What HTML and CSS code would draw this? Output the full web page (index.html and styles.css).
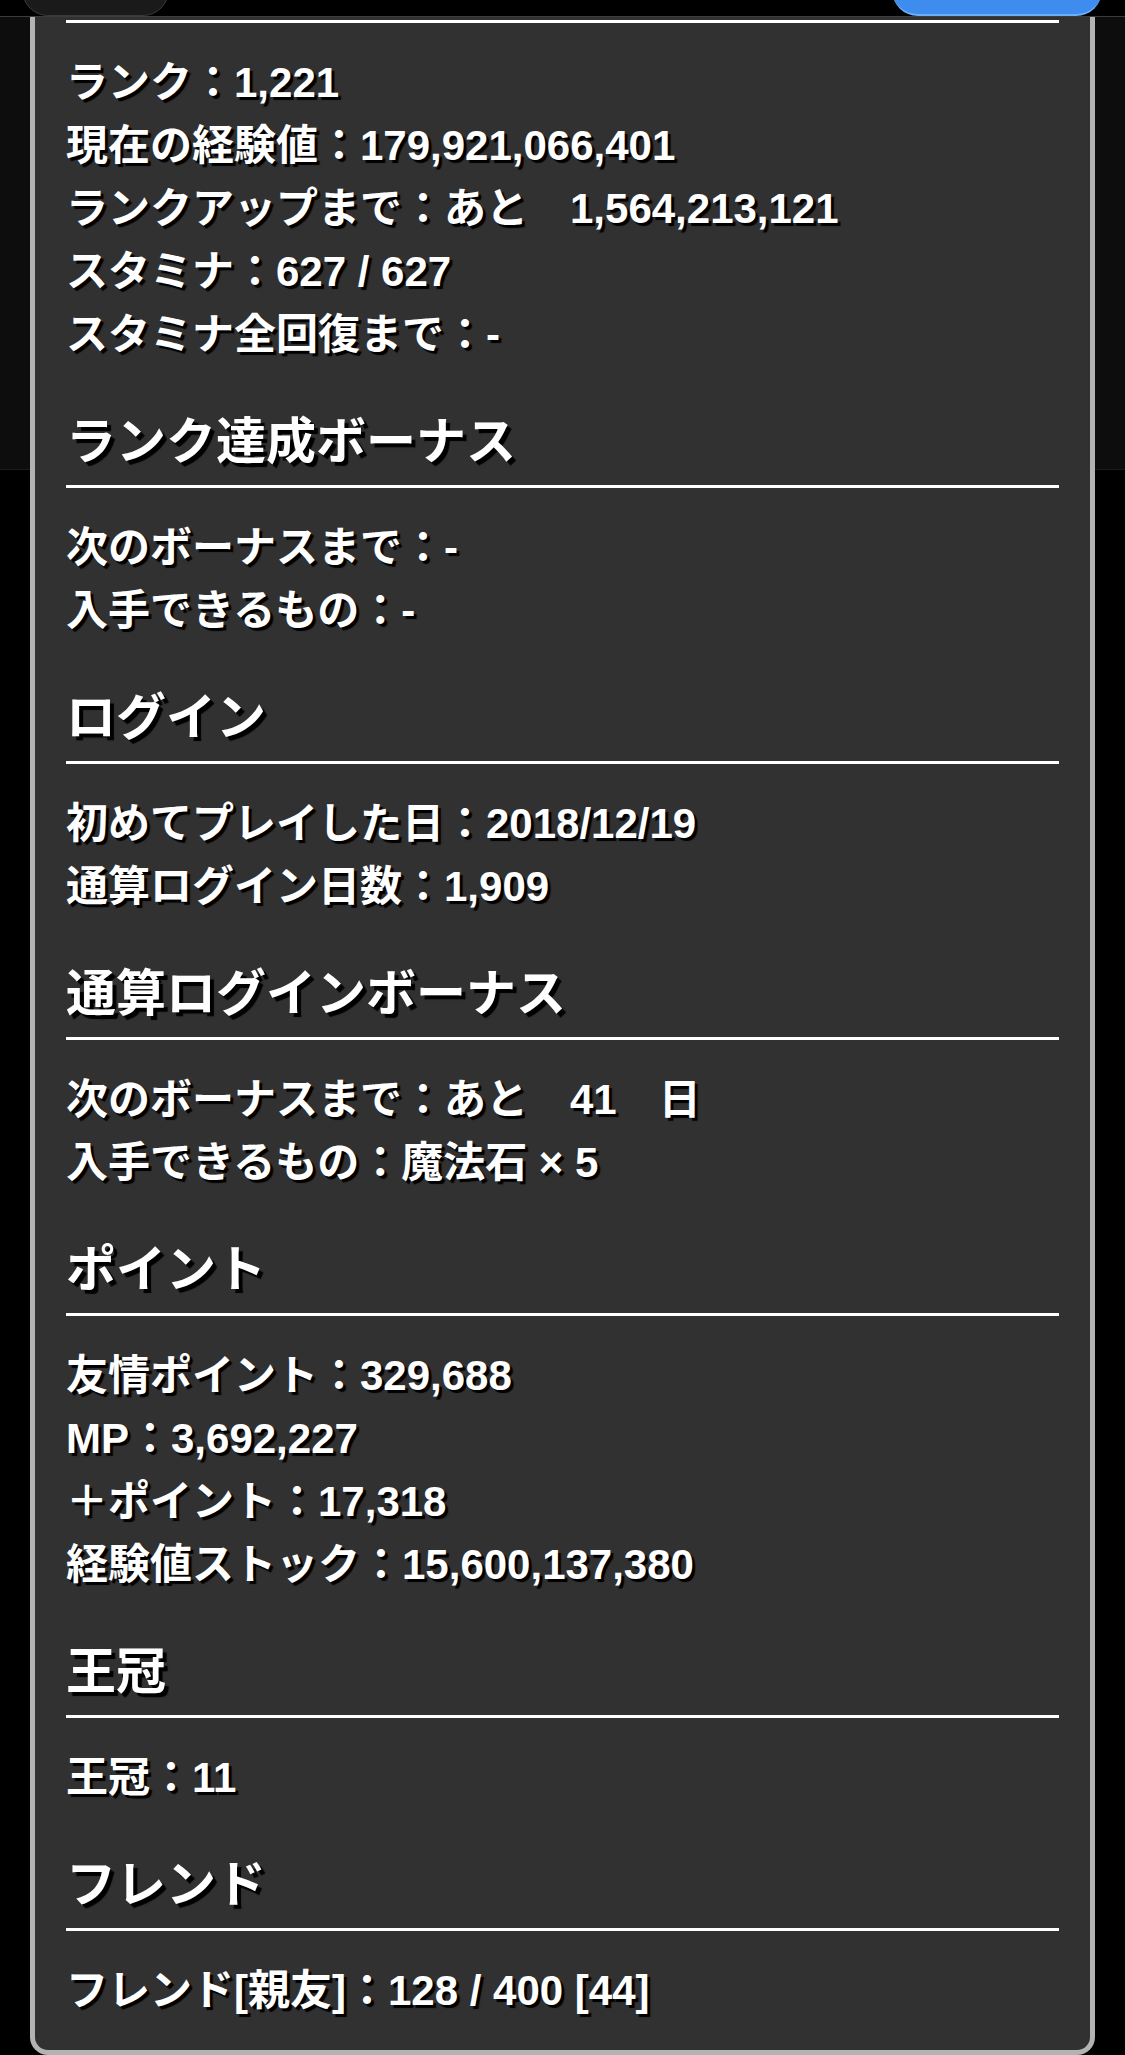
FILE: index.html
```html
<!DOCTYPE html>
<html lang="ja">

<head>
	<meta name="viewport" content="width=device-width, initial-scale=1.0">
	<meta charset="UTF-8">
	<link rel="stylesheet" href="styles.css">
</head>

<body>

	<div class="topbar">
		<span class="pill pill-dark"></span>
		<span class="pill pill-blue"></span>
	</div>

	<div class="panel">
		<hr class="rule">
		<ul class="rows">
			<li>ランク：1,221</li>
			<li>現在の経験値：179,921,066,401</li>
			<li>ランクアップまで：あと　1,564,213,121</li>
			<li>スタミナ：627 / 627</li>
			<li>スタミナ全回復まで：-</li>
		</ul>

		<h2 class="section-title">ランク達成ボーナス</h2>
		<hr class="rule">
		<ul class="rows">
			<li>次のボーナスまで：-</li>
			<li>入手できるもの：-</li>
		</ul>

		<h2 class="section-title">ログイン</h2>
		<hr class="rule">
		<ul class="rows">
			<li>初めてプレイした日：2018/12/19</li>
			<li>通算ログイン日数：1,909</li>
		</ul>

		<h2 class="section-title">通算ログインボーナス</h2>
		<hr class="rule">
		<ul class="rows">
			<li>次のボーナスまで：あと　41　日</li>
			<li>入手できるもの：魔法石 × 5</li>
		</ul>

		<h2 class="section-title">ポイント</h2>
		<hr class="rule">
		<ul class="rows">
			<li>友情ポイント：329,688</li>
			<li>MP：3,692,227</li>
			<li>＋ポイント：17,318</li>
			<li>経験値ストック：15,600,137,380</li>
		</ul>

		<h2 class="section-title">王冠</h2>
		<hr class="rule">
		<ul class="rows">
			<li>王冠：11</li>
		</ul>

		<h2 class="section-title">フレンド</h2>
		<hr class="rule">
		<ul class="rows">
			<li>フレンド[親友]：128 / 400 [44]</li>
		</ul>
	</div>

</body>

</html>
```

FILE: styles.css
```css
body {
	margin: 0;
	background: linear-gradient(to bottom, #000 0 16px, #0d0d0d 16px 469px, #1b1b1b 469px 470px, #000 470px);
	color: #fff;
	font-family: "Liberation Sans", "Noto Sans CJK JP", sans-serif;
	font-weight: bold;
}

.topbar {
	height: 16px;
	border-bottom: 1px solid #3c3c3c;
	background: #000;
	overflow: hidden;
	display: flex;
	justify-content: space-between;
	padding: 0 23px 0 22px;
}

.pill {
	display: block;
	height: 50px;
	margin-top: -36px;
	border-radius: 26px;
}

.pill-dark {
	width: 145px;
	background: #1a1a1a;
	border: 1px solid #3a3a3a;
}

.pill-blue {
	width: 210px;
	background: #3f8cef;
	border-bottom: 2px solid #6cb0fa;
}

.panel {
	margin: 0 30px;
	background: #313131;
	border: 5px solid #b3b3b3;
	border-top: none;
	border-radius: 0 0 18px 18px;
	padding: 3px 31px 28px;
}

.rule {
	height: 3px;
	margin: 0;
	border: none;
	background: #fff;
}

.rows {
	list-style: none;
	margin: 0;
	padding: 28px 0 0;
}

.rows li {
	font-size: 42px;
	line-height: 63px;
	white-space: nowrap;
	text-shadow: 3px 3px 1px #000;
}

.section-title {
	margin: 46px 0 13px;
	font-size: 50px;
	line-height: 60px;
	font-weight: bold;
	text-shadow: 4px 4px 1px #000;
}
```
